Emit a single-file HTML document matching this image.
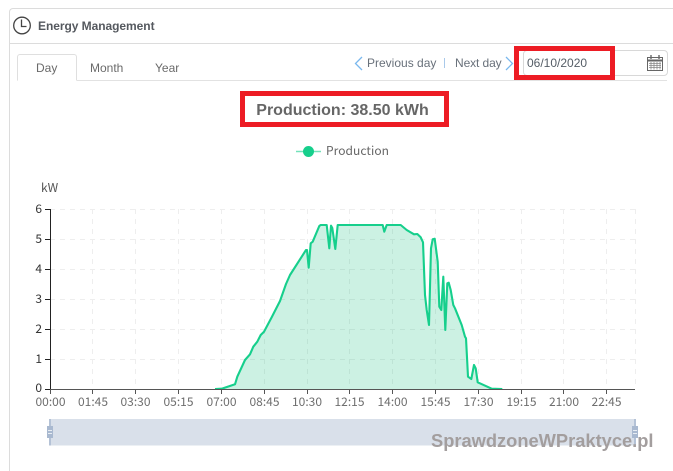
<!DOCTYPE html>
<html><head><meta charset="utf-8">
<style>
html,body{margin:0;padding:0;background:#fff}
#p{position:relative;width:673px;height:471px;overflow:hidden;background:#fff;font-family:"Liberation Sans",sans-serif;color:#666}
#p div,#p span.a{position:absolute;white-space:nowrap}
svg{position:absolute;left:0;top:0}
</style></head><body>
<div id="p">
<div style="left:9px;top:8px;width:664px;border:1px solid #dcdcdc;border-right:none;border-radius:4px 0 0 0;box-sizing:border-box;height:480px"></div>
<div style="left:10px;top:43px;width:663px;height:1px;background:#dcdcdc"></div>
<div style="left:38px;top:18px;font-size:12px;font-weight:bold;color:#55595f;line-height:16px;letter-spacing:-.05px">Energy Management</div>
<div style="left:17px;top:80px;width:650px;height:1px;background:#e2e2e2"></div>
<div style="left:17px;top:54px;width:60px;height:27px;box-sizing:border-box;border:1px solid #dfdfdf;border-bottom:1px solid #fff;border-radius:3px 3px 0 0;background:#fff"></div>
<div style="left:36px;top:60px;font-size:12px;line-height:16px;color:#6a6a6a">Day</div>
<div style="left:90px;top:60px;font-size:12px;line-height:16px;color:#6a6a6a">Month</div>
<div style="left:155px;top:60px;font-size:12px;line-height:16px;color:#6a6a6a">Year</div>
<div style="left:367px;top:55px;font-size:12px;line-height:16px;color:#68707a">Previous day</div>
<div style="left:444px;top:58px;width:1px;height:10px;background:#a9c9ea"></div>
<div style="left:455px;top:55px;font-size:12px;line-height:16px;color:#68707a;letter-spacing:-.1px">Next day</div>
<div style="left:523px;top:50px;width:145px;height:26px;box-sizing:border-box;border:1px solid #d8d8d8;border-radius:4px"></div>
<div style="left:527px;top:55px;font-size:12px;line-height:16px;color:#555d66">06/10/2020</div>
<div style="left:514px;top:46px;width:101px;height:34px;box-sizing:border-box;border:5px solid #ed1c24"></div>
<div style="left:240px;top:91px;width:209px;height:36px;box-sizing:border-box;border:5px solid #ed1c24"></div>
<div style="left:236px;top:101px;width:213px;text-align:center;font-size:16px;font-weight:bold;line-height:20px;color:#666">Production: 38.50 kWh</div>
<div style="left:326px;top:142px;font-size:12px;line-height:18px;letter-spacing:.05px;color:#666;font-family:'Noto Sans CJK SC','Liberation Sans',sans-serif">Production</div>
<svg width="673" height="471" viewBox="0 0 673 471" fill="none">
<!-- clock -->
<circle cx="22" cy="25.5" r="8.3" stroke="#444" stroke-width="1.3"/>
<path d="M21.5 19.5V26.5H26.5" stroke="#444" stroke-width="1.3"/>
<!-- chevrons -->
<path d="M362 57L355.5 63.5L362 70" stroke="#7ab8ee" stroke-width="1.3"/>
<path d="M506 57L512.5 63.5L506 70" stroke="#7ab8ee" stroke-width="1.3"/>
<!-- calendar -->
<g stroke="#666">
<rect x="647.5" y="57.5" width="15" height="13" fill="#fff"/>
<path d="M647.5 60.5H662.5" stroke-width="2"/>
<path d="M651 55V59M659 55V59" stroke-width="1.4"/>
<path d="M649 63.5H661M649 65.5H661M649 67.5H661M651 62V69.5M654 62V69.5M657 62V69.5M660 62V69.5" stroke="#888" stroke-width=".8"/>
</g>
<!-- legend -->
<path d="M296 151.5H321" stroke="#16cf8c" stroke-width="1.5" opacity=".6"/>
<circle cx="308.500" cy="151.500" r="5.500" fill="#16cf8c"/>
<!-- grid -->
<g stroke="#eee" stroke-width="1" stroke-dasharray="5 5">
<path d="M50 209.500H635M50 239.500H635M50 269.500H635M50 299.500H635M50 329.500H635M50 359.500H635"/>
<path d="M92.500 209V389M135.500 209V389M178.500 209V389M221.500 209V389M264.500 209V389M307.500 209V389M349.500 209V389M392.500 209V389M435.500 209V389M478.500 209V389M521.500 209V389M563.500 209V389M606.500 209V389M635.500 209V389"/>
</g>
<!-- area -->
<path fill="#16bf80" fill-opacity=".22" d="M215 389L221.700 388.700L235 384.300L237.300 376.700L245 360L250 354.300L253.300 346.700L257.300 341.700L260.700 335L264 331.700L271.700 317.300L280 301L286 284L290 275L306 250L307 250L308.700 267.700L310.700 243.300L312.700 241.700L319.300 226L320.700 225L326.700 225L329.300 248.300L331 225.700L332.300 228L335.300 249L337.700 225L382.700 225L384.300 231.700L386.700 225L400.700 225L406.700 230L414 234.300L417.300 234L420.700 237.300L423 242.300L425 295L426.700 310L429 325L431 248.300L432.700 239.300L434.700 238.700L437.700 261.700L439.300 306.700L441.300 310L443.300 276.700L445.300 330L447.300 283.300L448.700 282.700L450.700 290L453.300 305L455 308.300L461.700 325L465 336.700L466 338.300L468 376.700L471.300 379L474 365L475.700 368.300L477.700 382.300L491.700 388.700L502.300 389Z"/>
<path stroke="#16cf8c" stroke-width="2.100" stroke-linejoin="round" d="M215 389L221.700 388.700L235 384.300L237.300 376.700L245 360L250 354.300L253.300 346.700L257.300 341.700L260.700 335L264 331.700L271.700 317.300L280 301L286 284L290 275L306 250L307 250L308.700 267.700L310.700 243.300L312.700 241.700L319.300 226L320.700 225L326.700 225L329.300 248.300L331 225.700L332.300 228L335.300 249L337.700 225L382.700 225L384.300 231.700L386.700 225L400.700 225L406.700 230L414 234.300L417.300 234L420.700 237.300L423 242.300L425 295L426.700 310L429 325L431 248.300L432.700 239.300L434.700 238.700L437.700 261.700L439.300 306.700L441.300 310L443.300 276.700L445.300 330L447.300 283.300L448.700 282.700L450.700 290L453.300 305L455 308.300L461.700 325L465 336.700L466 338.300L468 376.700L471.300 379L474 365L475.700 368.300L477.700 382.300L491.700 388.700L502.300 389"/>
<!-- axes -->
<path d="M50.500 209V389M45 209.500H50M45 239.500H50M45 269.500H50M45 299.500H50M45 329.500H50M45 359.500H50M45 389.500H50" stroke="#222"/>
<path d="M50 389.500H635" stroke="#555"/>
<path d="M92.500 390V394M135.500 390V394M178.500 390V394M221.500 390V394M264.500 390V394M307.500 390V394M349.500 390V394M392.500 390V394M435.500 390V394M478.500 390V394M521.500 390V394M563.500 390V394M606.500 390V394M50.500 390V394" stroke="#555"/>
<!-- slider -->
<rect x="50" y="419" width="585" height="26.500" fill="#d9e0ea"/>
<rect x="49" y="419" width="2" height="26.500" fill="#b4c2d6"/>
<rect x="634" y="419" width="2" height="26.500" fill="#b4c2d6"/>
<rect x="47" y="426" width="6" height="12" fill="#a9b9d0"/>
<rect x="632" y="426" width="6" height="12" fill="#a9b9d0"/>
<path d="M48 430.500H52M48 433.500H52M633 430.500H637M633 433.500H637" stroke="#e8edf3"/>
<!-- labels -->
<g font-family="'Noto Sans CJK SC','Liberation Sans',sans-serif" font-size="12" fill="#6e6e6e" text-anchor="middle">
<text x="50.500" y="406">00:00</text><text x="93" y="406">01:45</text><text x="135.500" y="406">03:30</text><text x="178.500" y="406">05:15</text><text x="221.500" y="406">07:00</text><text x="264.500" y="406">08:45</text><text x="307" y="406">10:30</text><text x="349.500" y="406">12:15</text><text x="392.500" y="406">14:00</text><text x="435.500" y="406">15:45</text><text x="478.500" y="406">17:30</text><text x="521.500" y="406">19:15</text><text x="564" y="406">21:00</text><text x="606.500" y="406">22:45</text>
</g>
<g font-family="'Noto Sans CJK SC','Liberation Sans',sans-serif" font-size="12" fill="#333" text-anchor="end">
<text x="42" y="213">6</text><text x="42" y="243">5</text><text x="42" y="273">4</text><text x="42" y="303">3</text><text x="42" y="333">2</text><text x="42" y="363">1</text><text x="42" y="392">0</text>
</g>
<text x="41" y="192" font-family="'Noto Sans CJK SC','Liberation Sans',sans-serif" font-size="12" fill="#555">kW</text>
<text x="431" y="447" font-family="'Liberation Sans',sans-serif" font-size="18.300" font-weight="bold" fill="#a39e9e">SprawdzoneWPraktyce.pl</text>
</svg>
</div>
</body></html>
